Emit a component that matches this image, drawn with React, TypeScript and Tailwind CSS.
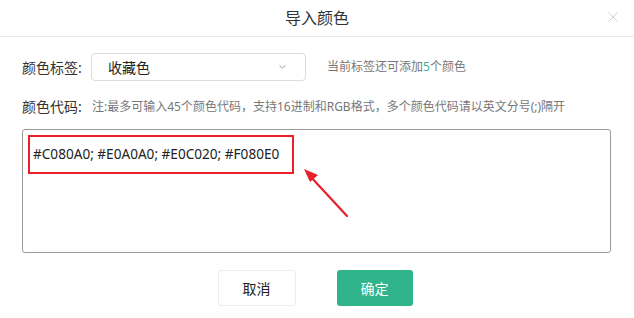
import React from "react"

const font = { fontFamily: '"Noto Sans", "Noto Sans CJK SC", sans-serif' }

export default function App() {
  return (
    <div className="relative h-[318px] w-[634px] overflow-hidden bg-white text-[#333]" style={font}>
      {/* header */}
      <div className="relative flex h-[37px] items-center justify-center border-b border-[#e8e8e8]">
        <span className="text-[16px] leading-none text-[#333]">导入颜色</span>
        <svg className="absolute right-[16px] top-[12px]" width="10" height="10" viewBox="0 0 10 10">
          <path d="M0.5 0.5 L9.5 9.5 M9.5 0.5 L0.5 9.5" stroke="#d0d0d0" strokeWidth="1" />
        </svg>
      </div>

      <div className="px-[22px]">
        {/* tag row */}
        <div className="mt-[16px] flex h-[28px] items-center">
          <span className="w-[69px] text-[14px]">颜色标签:</span>
          <div className="flex h-[28px] w-[215px] items-center justify-between rounded-[4px] border border-[#dcdcdc] pl-[16px] pr-[19px]">
            <span className="text-[14px] text-[#222]">收藏色</span>
            <svg width="7" height="4" viewBox="0 0 7 4">
              <path d="M0.5 0.5 L3.5 3 L6.5 0.5" fill="none" stroke="#999" strokeWidth="0.9" />
            </svg>
          </div>
          <span className="ml-[21px] text-[12px] text-[#777]">
            当前标签还可添加<span className="text-[#2fb48c]">5</span>个颜色
          </span>
        </div>

        {/* code row */}
        <div className="mt-[15px] flex items-center">
          <span className="w-[70px] text-[14px]">颜色代码:</span>
          <span className="text-[12px] text-[#777]">
            注:最多可输入45个颜色代码，支持16进制和RGB格式，多个颜色代码请以英文分号(;)隔开
          </span>
        </div>

        {/* textarea */}
        <div className="relative mt-[12px] h-[124px] w-[589px] rounded-[3px] border border-[#999] px-[5px] pt-[5px]">
          <div className="h-[39px] w-[266px] border-2 border-[#e8202a] pl-[3px] pt-[4px]">
            <span className="text-[13.6px] leading-[20px] text-[#222]">#C080A0; #E0A0A0; #E0C020; #F080E0</span>
          </div>
        </div>

        {/* buttons */}
        <div className="mt-[17px] flex justify-center gap-[41px] pr-[4px]">
          <button className="h-[36px] w-[78px] rounded-[3px] border border-[#ececec] bg-white text-[14px] text-[#222]">
            取消
          </button>
          <button className="h-[36px] w-[76px] rounded-[3px] bg-[#30b48c] text-[14px] text-white">
            确定
          </button>
        </div>
      </div>

      {/* red annotation arrow */}
      <svg className="absolute left-[296px] top-[162px]" width="60" height="60" viewBox="0 0 60 60">
        <path d="M51 54 L14 14" stroke="#e8202a" strokeWidth="2.2" strokeLinecap="round" />
        <path d="M8 7 L22 13 L14 20 Z" fill="#e8202a" />
      </svg>
    </div>
  )
}
